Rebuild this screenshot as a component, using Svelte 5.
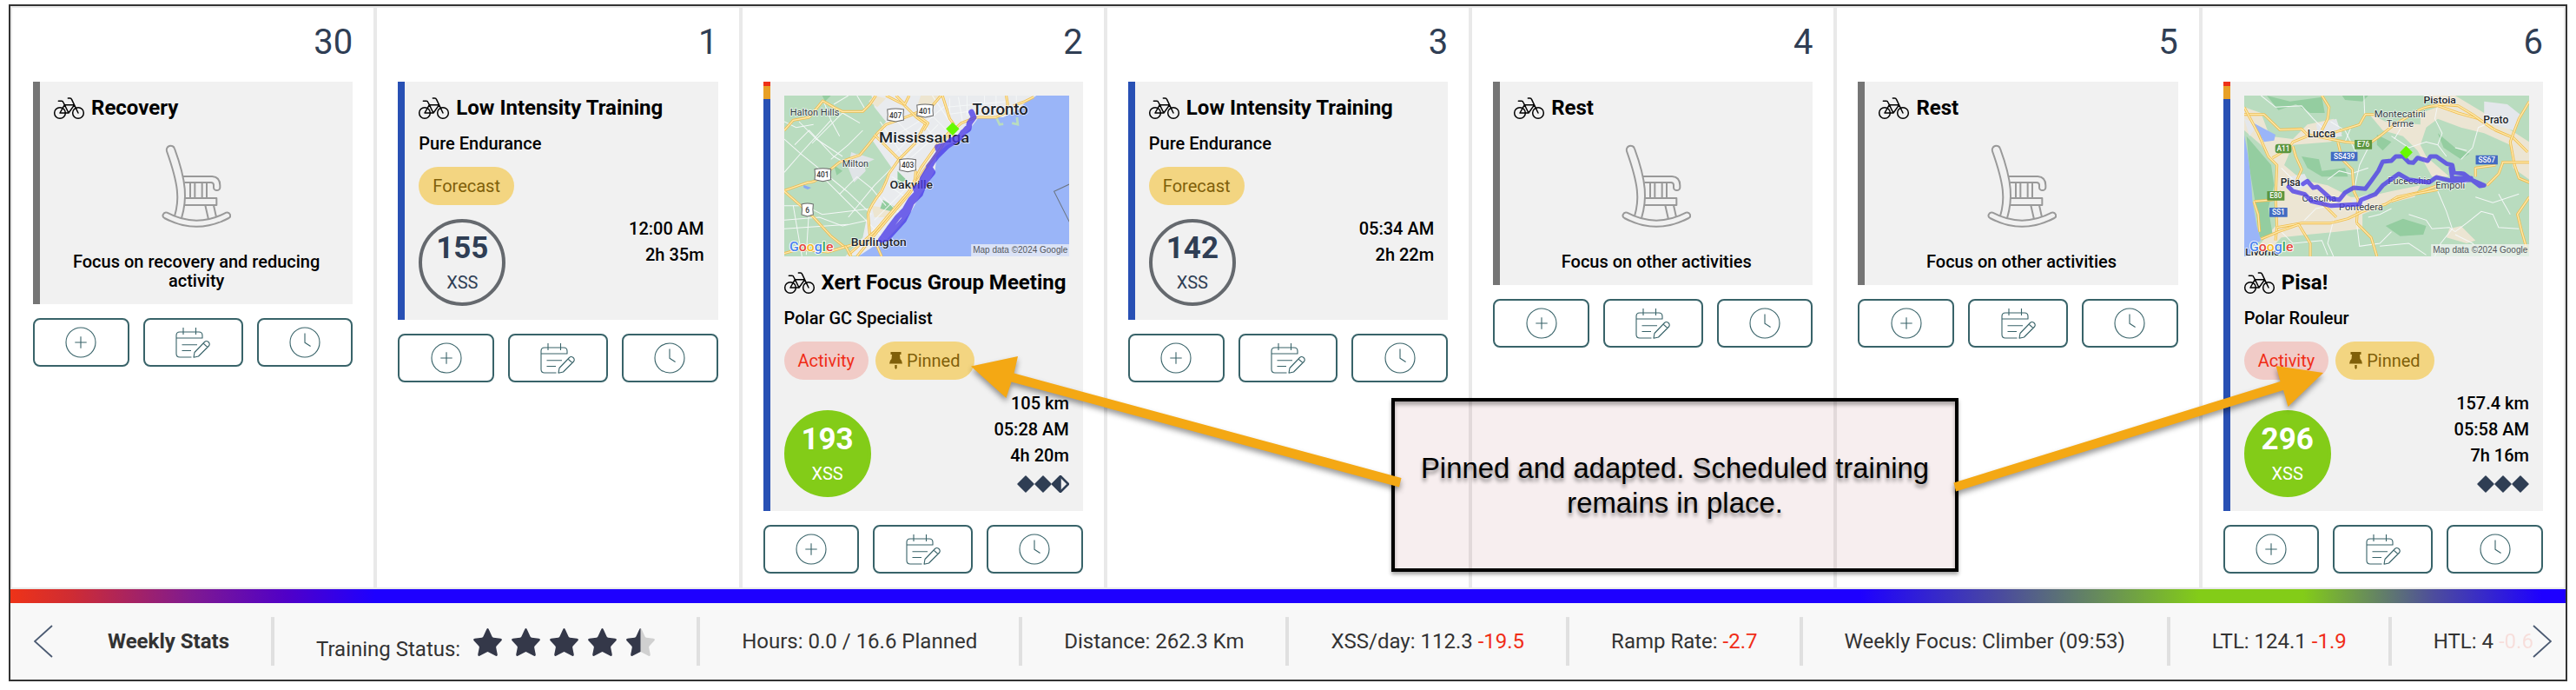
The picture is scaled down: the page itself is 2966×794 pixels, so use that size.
<script lang="ts">
  interface Label {
    text: string;
    x: number;
    y: number;
    size: number;
    width: number;
    bold?: boolean;
  }

  interface Sign {
    text: string;
    x: number;
    y: number;
    w: number;
    kind: string;
  }

  interface Day {
    date: number;
    type: string;
    title: string;
    note?: string;
    focus?: string;
    xss?: number;
    stats?: string[];
    halfDiamond?: boolean;
    map?: string;
  }

  const days: Day[] = [
    { date: 30, type: 'rest', title: 'Recovery', note: 'Focus on recovery and reducing activity' },
    { date: 1, type: 'forecast', title: 'Low Intensity Training', focus: 'Pure Endurance', xss: 155, stats: ['12:00 AM', '2h 35m'] },
    { date: 2, type: 'activity', title: 'Xert Focus Group Meeting', focus: 'Polar GC Specialist', xss: 193, stats: ['105 km', '05:28 AM', '4h 20m'], halfDiamond: true, map: 'toronto' },
    { date: 3, type: 'forecast', title: 'Low Intensity Training', focus: 'Pure Endurance', xss: 142, stats: ['05:34 AM', '2h 22m'] },
    { date: 4, type: 'rest', title: 'Rest', note: 'Focus on other activities' },
    { date: 5, type: 'rest', title: 'Rest', note: 'Focus on other activities' },
    { date: 6, type: 'activity', title: 'Pisa!', focus: 'Polar Rouleur', xss: 296, stats: ['157.4 km', '05:58 AM', '7h 16m'], map: 'pisa' }
  ];

  const weekStats = [
    { label: 'Hours: 0.0 / 16.6 Planned' },
    { label: 'Distance: 262.3 Km' },
    { label: 'XSS/day: 112.3', delta: '-19.5' },
    { label: 'Ramp Rate:', delta: '-2.7' },
    { label: 'Weekly Focus: Climber (09:53)' },
    { label: 'LTL: 124.1', delta: '-1.9' }
  ];

  const starPath = 'M15.2 1.2Q16.5 -1 17.8 1.2L21.6 9.6Q22 10.6 23.2 10.8L31.4 11.7Q33.8 12.3 32.4 14.2L26.6 20.4Q26 21.2 26.2 22.2L27.8 30.2Q27.8 32.6 25.8 31.8L17.6 27.4Q16.5 26.8 15.4 27.4L7.2 31.8Q5.2 32.6 5.2 30.2L6.8 22.2Q7 21.2 6.4 20.4L0.6 14.2Q-0.8 12.3 1.6 11.7L9.8 10.8Q11 10.6 11.4 9.6Z';

  const torontoMinor = [
    'M129 240L185 290L345 420L430 500', 'M129 355L190 285L290 175', 'M165 260L215 210L300 300L370 340', 'M225 255L330 150L390 185',
    'M129 470H200L260 500L430 480', 'M129 520L250 510L330 540L420 520', 'M129 550L350 535', 'M215 475L205 640', 'M160 470L190 645',
    'M270 380L360 470L480 590', 'M320 430L380 370L430 410L480 470', 'M350 510L440 400L500 340', 'M290 310L350 260L400 210', 'M180 180L240 240L330 300',
    'M129 180L170 200L230 190', 'M265 110L290 175L320 230', 'M300 120L350 90', 'M380 90L410 140', 'M460 180L540 300L600 350', 'M490 150L590 250',
    'M470 250L560 200L640 150', 'M500 300L620 180L690 120', 'M520 330L660 190', 'M560 310L640 240', 'M600 120L690 210', 'M580 150L660 250',
    'M640 90L700 180', 'M700 100V180', 'M730 95L745 185', 'M760 90V160', 'M690 130L900 110', 'M690 155L800 140', 'M820 90V120', 'M860 90V150', 'M930 90V130',
    'M440 520L520 440L560 400', 'M430 560L540 450', 'M470 440L530 500', 'M490 400L560 450', 'M500 370L590 420'
  ];
  const torontoMajor = [
    'M129 418L180 400L210 390Q235 390 260 368L320 320L390 295Q420 260 450 220L480 190L560 160L640 125L670 90',
    'M129 210L160 175L215 165L262 108L300 130L330 145H400L425 120L445 90',
    'M129 420L180 465L230 510L290 575L340 615',
    'M440 225L485 270L525 310', 'M615 190L580 255L525 310L490 360Q480 390 465 420Q425 470 418 500L425 580',
    'M480 90L540 120L585 165L620 190', 'M515 90L545 120L560 90', 'M380 645L450 560L500 500L560 430L610 350L670 270L690 230L740 185L790 165',
    'M350 640L440 560L560 420L600 340L660 255L700 215', 'M580 380L583 350', 'M675 90L700 170L715 190', 'M790 165L860 165L890 150L900 120L895 90',
    'M129 635L180 620L280 630L340 612L420 590', 'M445 600L465 645', 'M920 125L960 110L990 95', 'M590 160L625 185L610 210', 'M340 610L360 645'
  ];
  const torontoLabels: Label[] = [
    { text: 'Halton Hills', x: 149, y: 159, size: 31, width: 170 },
    { text: 'Toronto', x: 778, y: 157, size: 54, width: 193, bold: true },
    { text: 'Mississauga', x: 456, y: 252, size: 51, width: 312, bold: true },
    { text: 'Milton', x: 329, y: 337, size: 31, width: 91 },
    { text: 'Oakville', x: 493, y: 410, size: 38, width: 149, bold: true },
    { text: 'Burlington', x: 359, y: 609, size: 38, width: 192, bold: true }
  ];
  const torontoSigns: Sign[] = [
    { text: '407', x: 513, y: 158, w: 56, kind: 'shield' },
    { text: '401', x: 615, y: 143, w: 56, kind: 'shield' },
    { text: '403', x: 555, y: 331, w: 56, kind: 'shield' },
    { text: '401', x: 262, y: 364, w: 56, kind: 'shield' },
    { text: '6', x: 209, y: 485, w: 40, kind: 'shield' }
  ];

  const pisaMinor = [
    'M190 90L240 130L330 125L370 170L400 200', 'M430 180L480 210L520 290', 'M500 200L480 250', 'M545 90L548 160', 'M560 270L530 330L510 420',
    'M420 380L460 350L500 360L560 340', 'M800 260L815 220L790 170L800 120', 'M640 230L700 270L760 250L800 260L830 300', 'M880 310L920 270L940 200L990 180',
    'M860 270L900 280', 'M700 500L760 520L780 550L840 545L860 560', 'M860 560L900 530L950 490L990 500L1010 545L1080 550', 'M800 420L830 490L850 550L810 600L790 645',
    'M860 570L920 600L960 645', 'M440 520L420 600L440 645', 'M260 560L300 600L400 590L420 640', 'M520 530L530 610L600 600L640 560', 'M600 610L700 600L760 640',
    'M300 380L260 340', 'M340 520L380 480L430 470', 'M930 440L990 460L1080 430', 'M1010 430L1050 500', 'M640 480L600 500L560 510', 'M680 190L650 240'
  ];
  const pisaMajor = [
    'M132 155L200 155L255 208L330 205L350 225L480 250L560 258', 'M132 130L180 220L215 300L245 330L240 440L245 545L240 590', 'M350 230L300 250Q290 270 230 305',
    'M300 265L310 300L330 345L310 390', 'M400 90L425 130L420 170L400 210', 'M400 225L450 215L530 190L550 155L580 155', 'M560 258L600 230L650 190L720 150Q750 125 800 125L870 150L940 170L1000 210L1060 235L1110 285',
    'M800 120L870 125L920 155L990 205', 'M1116 110L1080 170L1050 250L1065 330L1080 375L1116 390', 'M455 250L470 310L505 345L510 420L525 450L520 530',
    'M245 545L330 530L430 530L490 515L540 490L620 465L660 440L730 425L800 400', 'M640 455L720 430L800 415', 'M400 460L450 510', 'M1020 320H1116', 'M1025 320L1010 360L970 400',
    'M165 455L230 450L260 420', 'M165 455L180 500L185 560', 'M190 585L250 560L320 535L360 600L360 645', 'M520 530L570 580L590 645', 'M1116 440L1075 500L1090 560L1110 630', 'M930 370L930 340L1000 330'
  ];
  const pisaLabels: Label[] = [
    { text: 'Pistoia', x: 751, y: 117, size: 35, width: 112, bold: true },
    { text: 'Montecatini', x: 581, y: 165, size: 34, width: 177 },
    { text: 'Terme', x: 623, y: 197, size: 34, width: 94 },
    { text: 'Prato', x: 957, y: 186, size: 36, width: 87, bold: true },
    { text: 'Lucca', x: 350, y: 234, size: 36, width: 97, bold: true },
    { text: 'Pisa', x: 257, y: 403, size: 36, width: 69, bold: true },
    { text: 'Fucecchio', x: 628, y: 396, size: 33, width: 150 },
    { text: 'Empoli', x: 792, y: 410, size: 34, width: 102 },
    { text: 'Cascina', x: 331, y: 456, size: 33, width: 119 },
    { text: 'Pontedera', x: 459, y: 485, size: 33, width: 152 },
    { text: 'Livorno', x: 136, y: 641, size: 34, width: 118, bold: true }
  ];
  const pisaSigns: Sign[] = [
    { text: 'A11', x: 267, y: 273, w: 56, kind: 'green round' },
    { text: 'E76', x: 543, y: 259, w: 60, kind: 'green' },
    { text: 'E80', x: 241, y: 436, w: 60, kind: 'green' },
    { text: 'SS439', x: 477, y: 300, w: 92, kind: 'blue' },
    { text: 'SS67', x: 969, y: 312, w: 76, kind: 'blue' },
    { text: 'SS1', x: 250, y: 493, w: 62, kind: 'blue' }
  ];
</script>

{#snippet bike()}
  <svg class="bike" viewBox="186 333 105 75">
    <circle cx="207" cy="387" r="19" />
    <circle cx="270" cy="387" r="19" />
    <path d="M202 346H213Q217 346 219 351L223 359M207 387L223 359H257L237 387H207M223 359L237 387M235 336H242Q246 336 248 341L270 387" />
  </svg>
{/snippet}

{#snippet chair()}
  <svg class="chair" viewBox="558 462 240 360">
    <path d="M603 746C620 690 618 640 576 522A14 14 0 0 1 603 513C646 630 646 690 627 753" />
    <path d="M633 609H733Q760 611 760 640V647A11 10 0 0 1 738 647V638Q737 630 729 630H637" />
    <path d="M657 630V683M673 630V683M698 630V683M714 630V683" />
    <path d="M639 684H748V708H638M709 709L720 757M738 709L747 749" />
    <path d="M577 734Q678 788 781 734A11 10.500 0 0 1 790 753Q678 812 568 753A11 10.500 0 0 1 577 734Z" />
  </svg>
{/snippet}

{#snippet pin()}
  <svg class="pin" viewBox="0 0 15 20">
    <path d="M1.500 0H13.500V3H12L12.500 8Q15 10 15 13.500H0Q0 10 2.500 8L3 3H1.500ZM6.300 15H8.700V18.500L7.500 20L6.300 18.500Z" />
  </svg>
{/snippet}

{#snippet mapText(labels: Label[], signs: Sign[])}
  {#each signs as s}
    <g class="sign {s.kind}">
      {#if s.kind === 'shield'}
        <path d="M{s.x - s.w / 2} {s.y - 20}Q{s.x} {s.y - 26} {s.x + s.w / 2} {s.y - 20}Q{s.x + s.w / 2 - 3} {s.y} {s.x + s.w / 2} {s.y + 16}L{s.x} {s.y + 22}L{s.x - s.w / 2} {s.y + 16}Q{s.x - s.w / 2 + 3} {s.y} {s.x - s.w / 2} {s.y - 20}Z" />
      {:else}
        <rect x={s.x - s.w / 2} y={s.y - 16} width={s.w} height="32" rx={s.kind === 'green round' ? 10 : 1} />
      {/if}
      <text x={s.x} y={s.y + 9} text-anchor="middle">{s.text}</text>
    </g>
  {/each}
  {#each labels as l}
    <text class="place" class:bold={l.bold} x={l.x} y={l.y} font-size={l.size} textLength={l.width} lengthAdjust="spacingAndGlyphs">{l.text}</text>
  {/each}
{/snippet}

{#snippet mapCredit(x: number)}
  <text class="google" x={x + 18} y="627" textLength="151" lengthAdjust="spacingAndGlyphs"><tspan fill="#4a82ee">G</tspan><tspan fill="#e5463a">o</tspan><tspan fill="#f5bb28">o</tspan><tspan fill="#4a82ee">g</tspan><tspan fill="#3ba757">l</tspan><tspan fill="#e5463a">e</tspan></text>
  <rect x={x + 645} y="603" width="339" height="42" fill="#f5f5f5" opacity=".7" />
  <text class="credit" x={x + 651} y="634" textLength="327" lengthAdjust="spacingAndGlyphs">Map data ©2024 Google</text>
{/snippet}

{#snippet torontoMap()}
  <svg class="map" viewBox="129 90 984 555" preserveAspectRatio="none">
    <rect x="129" y="90" width="984" height="555" fill="#b9dcbf" />
    <path d="M430 90H1000L940 150L850 175L780 200L690 290L640 400L560 500L480 590L400 640L340 645L400 580L420 480L470 400L500 340L430 240L480 180L440 130Z" fill="#e9ebee" />
    <path d="M600 90H670L640 120H590ZM440 90L480 100L450 130L420 110ZM430 470L490 480L500 510L440 510Z" fill="#ede5d0" />
    <path d="M360 285L400 300L410 350L370 390L350 340ZM380 290L440 310L400 330Z" fill="#e0e4e7" />
    <path d="M470 450L520 480L500 490L460 480ZM520 350L550 380L520 400ZM300 330L330 350L310 365ZM260 90H290L270 110Z" fill="#94cda0" />
    <path d="M1000 90L960 115L935 140L885 165H800L770 205L735 240L690 262L655 290L650 345L625 395L600 430L570 485L530 540L485 585L440 608L385 645H1113V90Z" fill="#9ab5f8" />
    <path d="M862 168L872 190L885 188M915 185L935 190L932 165" fill="none" stroke="#b9dcbf" stroke-width="8" />
    <path d="M195 398L222 408L210 414L196 408Z" fill="#88a9f4" />
    {#each torontoMinor as d}<path class="minor" {d} />{/each}
    {#each torontoMajor as d}<path class="major" {d} /><path class="core" {d} />{/each}
    <path d="M1113 396L1060 421L1113 526" fill="none" stroke="#6b7480" stroke-width="3" />
    {@render mapText(torontoLabels, torontoSigns)}
    <path class="route wide" d="M775 147L783 165L768 185L765 205L745 218L735 235L705 245L690 260L658 268L664 285L640 320L625 345L607 375L602 400L582 410L588 425L565 450L545 485L520 510L490 550L463 588L485 582L525 538L541 520L556 490L568 460L598 430L613 390L641 355L628 335L655 300L690 265L728 240L758 205" />
    <path d="M710 182L733 205L710 228L687 205Z" fill="#66f900" />
    {@render mapCredit(129)}
  </svg>
{/snippet}

{#snippet pisaMap()}
  <svg class="map" viewBox="132 90 984 555" preserveAspectRatio="none">
    <rect x="132" y="90" width="984" height="555" fill="#b9dcbf" />
    <path d="M132 130L190 150L220 230L300 240L350 190L440 170L470 220L430 250L300 260L270 330L330 380L420 400L500 440L550 440L640 420L740 400L720 440L640 460L540 500L540 550L450 560L350 570L260 580L200 645H150L240 540L240 330L190 260L132 210Z" fill="#ece5d3" />
    <path d="M560 150L620 180L740 190L740 150L800 130L760 90H860L960 150L1116 250V380L1060 340L1050 260L960 220L880 200L800 170L760 200L740 260L760 300L840 370L780 370L730 280L680 230L610 210ZM840 550L880 540L930 590L900 600L830 580Z" fill="#ece5d3" />
    <path d="M880 210L1040 260L1040 390L960 400L880 340L840 290Z" fill="#b9dcbf" />
    <path d="M380 190L450 170L470 230L390 240ZM290 370L340 360L360 400L300 420ZM960 110L1040 120L1090 160L1060 210L960 180ZM132 170L180 190L150 230ZM500 450L560 430L540 500ZM850 400L910 380L880 410Z" fill="#e4e7eb" />
    <path d="M210 90L290 110L400 95L410 150L360 150L310 120L250 140ZM330 300L390 310L400 350L480 340L490 370L400 370L350 340ZM620 540L680 515L760 540L750 570L670 575ZM800 220L860 270L910 290L880 310L820 270ZM470 90H560L540 110L480 105ZM590 225L640 250L610 280L590 260Z" fill="#94cda0" />
    <path d="M140 230L225 330L235 400L215 480L230 570L185 580L170 460L150 340Z" fill="#94cda0" />
    <path d="M132 225Q155 340 160 450L175 540L190 590L160 610L150 645H132ZM165 185L240 225L235 245L200 250L180 215Z" fill="#9ab5f8" />
    {#each pisaMinor as d}<path class="minor" {d} />{/each}
    {#each pisaMajor as d}<path class="major" {d} /><path class="core" {d} />{/each}
    {@render mapText(pisaLabels, pisaSigns)}
    <path class="route" d="M285 405L300 420L340 430L365 455L430 470L530 465L535 450L585 430L610 400L665 360L700 380L770 390L795 372L850 385L915 380L960 400L945 402L890 360L855 355L850 330L830 325L795 300H775L765 315L730 305L715 322L700 320L680 300L655 300L640 315L610 318L595 350L570 385L550 412L510 408L480 425L460 450L430 445L385 405L370 408L350 385L335 395M845 340L850 375L915 375" />
    <path d="M691 263L713 286L691 309L669 286Z" fill="#66f900" />
    {@render mapCredit(132)}
  </svg>
{/snippet}

{#snippet actions()}
  <div class="actions">
    <button aria-label="Add">
      <svg width="36" height="36" viewBox="0 0 36 36"><circle cx="18" cy="18" r="17" /><path d="M18 11.300V24.700M11.300 18H24.700" /></svg>
    </button>
    <button aria-label="Plan">
      <svg width="40" height="36" viewBox="0 0 40 36">
        <path d="M18.500 35H5Q1 35 1 31V10Q1 6 5 6H27Q31 6 31 10V13H1M9 1V9M23.500 1V9M7.500 20.700H25M7.500 27.500H18" />
        <path d="M21 35.200L22 29.500L33.500 17.500Q35.500 15.600 38 17.500Q40.200 19.800 38.500 22L26.500 34ZM32 19L37 23.700" />
      </svg>
    </button>
    <button aria-label="History">
      <svg width="36" height="36" viewBox="0 0 36 36"><circle cx="18" cy="18" r="17" /><path d="M18 7.500V18.200L24.600 22.500" /></svg>
    </button>
  </div>
{/snippet}

<div class="page">
  <div class="planner">
    <div class="week">
      {#each days as day}
        <div class="day">
          <div class="date">{day.date}</div>
          <div class="card {day.type}">
            {#if day.map === 'toronto'}
              {@render torontoMap()}
            {:else if day.map === 'pisa'}
              {@render pisaMap()}
            {/if}
            <div class="title">{@render bike()}<span>{day.title}</span></div>
            {#if day.type === 'rest'}
              {@render chair()}
              <div class="note">{day.note}</div>
            {:else}
              <div class="focus">{day.focus}</div>
              <div class="badges">
                {#if day.type === 'forecast'}
                  <span class="badge gold">Forecast</span>
                {:else}
                  <span class="badge red">Activity</span>
                  <span class="badge gold">{@render pin()}Pinned</span>
                {/if}
              </div>
              <div class="summary">
                <div class="score"><strong>{day.xss}</strong><span>XSS</span></div>
                <div class="stats">
                  {#each day.stats ?? [] as stat}
                    <div>{stat}</div>
                  {/each}
                  {#if day.type === 'activity'}
                    <svg class="diamonds" width="60" height="20" viewBox="0 0 60 20">
                      <path d="M10 1L19 10L10 19L1 10ZM30 1L39 10L30 19L21 10Z" />
                      <path class:hollow={day.halfDiamond} d="M50 1L59 10L50 19L41 10Z" />
                      {#if day.halfDiamond}<path d="M50 1V19L41 10Z" />{/if}
                    </svg>
                  {/if}
                </div>
              </div>
            {/if}
          </div>
          {@render actions()}
        </div>
      {/each}
    </div>

    <div class="load-bar"></div>

    <div class="footer">
      <svg class="chevron" viewBox="0 0 22 38"><path d="M21 1L1 19L21 37" /></svg>
      <div class="item heading">Weekly Stats</div>
      <div class="item status">
        <span>Training Status:</span>
        <div class="stars">
          {#each [1, 1, 1, 1, 0.5] as fill}
            <svg width="33" height="32" viewBox="0 0 33 32">
              {#if fill < 1}
                <clipPath id="half"><rect width="16.500" height="32" /></clipPath>
                <path d={starPath} fill="#d0d0d0" />
                <path d={starPath} clip-path="url(#half)" />
              {:else}
                <path d={starPath} />
              {/if}
            </svg>
          {/each}
        </div>
      </div>
      {#each weekStats as stat}
        <div class="item">{stat.label}{#if stat.delta}&nbsp;<span class="delta">{stat.delta}</span>{/if}</div>
      {/each}
      <div class="item last">HTL: 4&nbsp;<span class="delta faded">-0.6</span></div>
      <svg class="chevron next" viewBox="0 0 22 38"><path d="M1 1L21 19L1 37" /></svg>
    </div>
  </div>

  <div class="callout">Pinned and adapted. Scheduled training remains in place.</div>
  <svg class="arrows" width="2966" height="794" viewBox="0 0 2966 794">
    <path d="M1118 421.500L1172 410L1167.500 429.500L1613.500 550L1611 560.500L1164.500 439.500L1158.500 458Z" />
    <path d="M2675 429L2620.500 421L2625.500 439L2249.500 555.500L2252 565.500L2629 449L2634.500 468Z" />
  </svg>
</div>

<style>
  :global(body) { background: #fff; margin: 0; }

  .page {
    position: relative;
    box-sizing: border-box;
    width: 2966px;
    height: 794px;
    padding: 5px 10px 10px;
    overflow: hidden;
    font-family: Roboto, 'Liberation Sans', sans-serif;
    font-size: 20px;
    line-height: 22px;
    color: #000;
  }

  .planner { box-sizing: border-box; height: 779px; border: 2px solid #333; display: flex; flex-direction: column; }
  .week { display: grid; grid-template-columns: repeat(7, 1fr); height: 671px; }
  .day { border: 2px solid #e9e9e9; padding: 16px 24px; min-width: 0; box-sizing: border-box; }
  .date { font-size: 40px; line-height: 48px; margin-bottom: 21px; text-align: right; color: #2f3e54; }

  .card { display: flex; flex-direction: column; gap: 16px; padding: 16px; background: #f1f1f1; border-left: 8px solid #757575; }
  .card.forecast { border-left-color: #2850b4; }
  .card.activity {
    border-left: 0;
    padding-left: 24px;
    background: linear-gradient(#ee3118 5px, #e8a026 5px 20px, #2850b4 20px) 0 0 / 8px 100% no-repeat #f1f1f1;
  }

  .title { display: flex; align-items: center; gap: 8px; font-size: 24px; line-height: 28px; font-weight: 700; white-space: nowrap; }
  .bike { width: 35px; height: 25px; flex: none; fill: none; stroke: #000; stroke-width: 4.5; stroke-linecap: round; stroke-linejoin: round; overflow: visible; }
  .chair { width: 80px; height: 120px; align-self: center; fill: none; stroke: #999; stroke-width: 6; stroke-linejoin: round; }
  .note { text-align: center; font-weight: 500; }
  .focus { font-weight: 500; }

  .badges { display: flex; gap: 8px; }
  .badge { display: flex; align-items: center; padding: 11px 16px; border-radius: 22px; }
  .badge.gold { background: #f3d581; color: #80600a; }
  .badge.red { background: #f1cbc7; color: #f02d17; }
  .pin { width: 15px; height: 20px; margin-right: 5px; fill: #80600a; }

  .summary { display: flex; justify-content: space-between; }
  .score {
    box-sizing: border-box;
    width: 100px;
    height: 100px;
    align-self: flex-end;
    border: 4px solid #65696e;
    border-radius: 50%;
    display: flex;
    flex-direction: column;
    align-items: center;
    justify-content: center;
    color: #2f3e54;
  }
  .score strong { font-size: 35px; line-height: 42px; margin: -2px 0 4px; }
  .score span { line-height: 24px; margin-top: 2px; }
  .activity .score { background: #83cc18; border-color: #83cc18; color: #fff; }
  .stats { display: flex; flex-direction: column; align-items: flex-end; gap: 8px; font-weight: 500; }
  .diamonds { margin: 4px 0 5px; fill: #2f3e54; stroke: #2f3e54; stroke-width: 1.5; stroke-linejoin: round; }
  .diamonds .hollow { fill: #f1f1f1; stroke-width: 2.5; }

  .actions { display: flex; gap: 16px; margin-top: 16px; }
  button {
    flex: 1 1 auto;
    height: 56px;
    padding: 0;
    display: flex;
    align-items: center;
    justify-content: center;
    background: #fff;
    border: 2px solid #386369;
    border-radius: 8px;
  }
  button svg { fill: none; stroke: #386369; stroke-width: 1.1; stroke-linejoin: round; }

  .map { display: block; width: 100%; height: 185px; }
  .map .minor { fill: none; stroke: #f4f7f7; stroke-width: 3; }
  .map .major { fill: none; stroke: #f0bd4e; stroke-width: 9; stroke-linejoin: round; }
  .map .core { fill: none; stroke: #fde9ae; stroke-width: 4; stroke-linejoin: round; }
  .map .route { fill: none; stroke: #4b3be8; stroke-width: 15; stroke-linejoin: round; stroke-linecap: round; opacity: .78; }
  .map .route.wide { stroke-width: 20; }
  .map .place { fill: #333b42; stroke: #fff; stroke-width: 4; stroke-opacity: .8; paint-order: stroke; }
  .map .place.bold { font-weight: 500; fill: #202429; }
  .map .credit { font-size: 30px; fill: #54585e; font-family: 'Liberation Sans', sans-serif; }
  .map .google { font-size: 46px; font-weight: 500; stroke: #fff; stroke-width: 5; paint-order: stroke; }
  .sign text { font-size: 25px; font-weight: 500; fill: #fff; }
  .sign.shield text { fill: #333; }
  .sign.shield path { fill: #fff; stroke: #666; stroke-width: 3; }
  .sign.green rect { fill: #5c963f; }
  .sign.blue rect { fill: #426bc2; }

  .load-bar {
    height: 16px;
    background: linear-gradient(90deg, #ee3318 0, #cf2c33 70px, #801a90 208px, #5000c8 318px, #1e00ff 420px, #1e00ff 2130px, #4a4a9f 2290px, #83cc18 2520px, #83cc18 2640px, #4d4d9c 2790px, #1e00ff 2915px);
  }

  .footer { position: relative; flex: 1; display: flex; align-items: center; background: #f8f8f8; font-size: 24px; line-height: 28px; color: #333; white-space: nowrap; overflow: hidden; }
  .item { box-sizing: border-box; height: 56px; display: flex; align-items: center; padding: 0 48px; border-right: 4px solid #e0e0e0; flex: none; }
  .item.last { border-right: 0; padding-right: 0; }
  .heading { font-weight: 700; }
  .status { align-items: baseline; padding-top: 13px; }
  .stars { display: flex; gap: 11px; margin-left: 15px; }
  .stars svg { fill: #343849; }
  .delta { color: #f02d17; }
  .delta.faded { opacity: .12; }
  .chevron { width: 22px; height: 38px; margin: 0 15px 0 27px; flex: none; fill: none; stroke: #4b5a72; stroke-width: 1.8; }
  .chevron.next { position: absolute; right: 16px; top: 25px; margin: 0; }

  .callout {
    position: absolute;
    left: 1602px;
    top: 458px;
    width: 653px;
    height: 200px;
    box-sizing: border-box;
    padding: 1px 20px 0;
    border: 4px solid #000;
    background: rgba(130, 0, 20, .065);
    box-shadow: 0 3px 4px rgba(0, 0, 0, .35), inset 0 4px 4px rgba(0, 0, 0, .3);
    display: flex;
    align-items: center;
    font: 32.9px/39.5px 'Liberation Sans', Arial, sans-serif;
    text-align: center;
    text-shadow: 0 4px 4px rgba(0, 0, 0, .45);
  }
  .arrows { position: absolute; left: 0; top: 0; fill: #f4a814; filter: drop-shadow(0 4px 3px rgba(0, 0, 0, .4)); pointer-events: none; }
</style>
